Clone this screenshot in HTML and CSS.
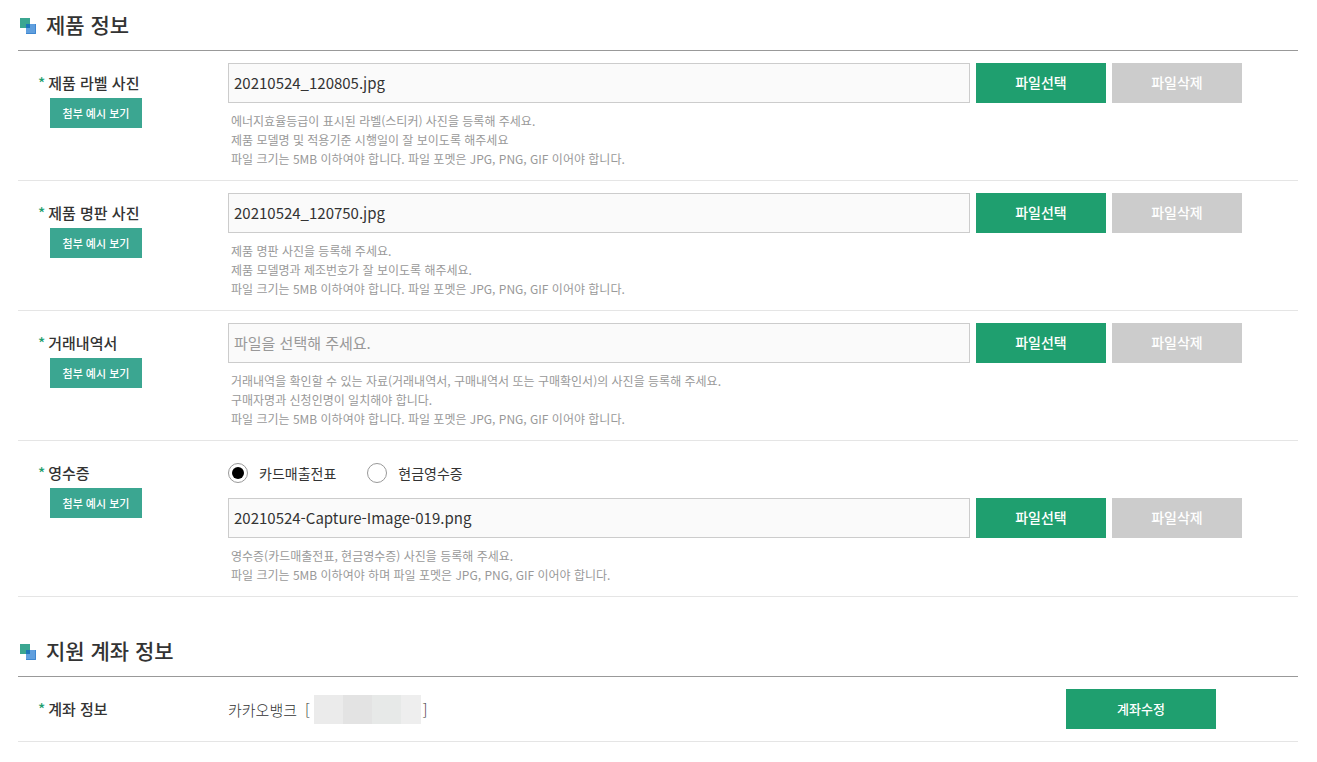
FILE: index.html
```html
<!DOCTYPE html>
<html lang="ko">
<head>
  <meta charset="UTF-8">
  <meta name="viewport" content="width=device-width, initial-scale=1.0">
  <title>제품 정보</title>
  <link rel="stylesheet" href="styles.css">
</head>
<body>

<!-- 제품 정보 -->
<section class="section">
  <h2 class="section-title">
    <svg class="title-icon" viewBox="0 0 16 16" aria-hidden="true">
      <rect width="10" height="10" fill="#3ba691"/>
      <rect x="6" y="6" width="10" height="10" fill="#609fde"/>
      <path d="M6 15.5h9.5V6" fill="none" stroke="#3f87d0"/>
      <rect x="6" y="6" width="4" height="4" fill="#1b76ba"/>
    </svg>
    제품 정보
  </h2>

  <div class="row">
    <div class="row-head">
      <label class="row-label" for="labelFile"><span class="required">*</span>제품 라벨 사진</label>
      <button type="button" class="btn-example">첨부 예시 보기</button>
    </div>
    <div class="row-body">
      <div class="file-line">
        <input type="text" class="file-name" id="labelFile" value="20210524_120805.jpg" placeholder="파일을 선택해 주세요." readonly>
        <button type="button" class="btn btn-select">파일선택</button>
        <button type="button" class="btn btn-delete">파일삭제</button>
      </div>
      <p class="hint">
        에너지효율등급이 표시된 라벨(스티커) 사진을 등록해 주세요.<br>
        제품 모델명 및 적용기준 시행일이 잘 보이도록 해주세요<br>
        파일 크기는 5MB 이하여야 합니다. 파일 포멧은 JPG, PNG, GIF 이어야 합니다.
      </p>
    </div>
  </div>

  <div class="row">
    <div class="row-head">
      <label class="row-label" for="plateFile"><span class="required">*</span>제품 명판 사진</label>
      <button type="button" class="btn-example">첨부 예시 보기</button>
    </div>
    <div class="row-body">
      <div class="file-line">
        <input type="text" class="file-name" id="plateFile" value="20210524_120750.jpg" placeholder="파일을 선택해 주세요." readonly>
        <button type="button" class="btn btn-select">파일선택</button>
        <button type="button" class="btn btn-delete">파일삭제</button>
      </div>
      <p class="hint">
        제품 명판 사진을 등록해 주세요.<br>
        제품 모델명과 제조번호가 잘 보이도록 해주세요.<br>
        파일 크기는 5MB 이하여야 합니다. 파일 포멧은 JPG, PNG, GIF 이어야 합니다.
      </p>
    </div>
  </div>

  <div class="row">
    <div class="row-head">
      <label class="row-label" for="dealFile"><span class="required">*</span>거래내역서</label>
      <button type="button" class="btn-example">첨부 예시 보기</button>
    </div>
    <div class="row-body">
      <div class="file-line">
        <input type="text" class="file-name" id="dealFile" placeholder="파일을 선택해 주세요." readonly>
        <button type="button" class="btn btn-select">파일선택</button>
        <button type="button" class="btn btn-delete">파일삭제</button>
      </div>
      <p class="hint">
        거래내역을 확인할 수 있는 자료(거래내역서, 구매내역서 또는 구매확인서)의 사진을 등록해 주세요.<br>
        구매자명과 신청인명이 일치해야 합니다.<br>
        파일 크기는 5MB 이하여야 합니다. 파일 포멧은 JPG, PNG, GIF 이어야 합니다.
      </p>
    </div>
  </div>

  <div class="row">
    <div class="row-head">
      <label class="row-label" for="receiptFile"><span class="required">*</span>영수증</label>
      <button type="button" class="btn-example">첨부 예시 보기</button>
    </div>
    <div class="row-body">
      <div class="radio-line">
        <label class="radio"><input type="radio" name="receiptType" checked>카드매출전표</label>
        <label class="radio"><input type="radio" name="receiptType">현금영수증</label>
      </div>
      <div class="file-line">
        <input type="text" class="file-name" id="receiptFile" value="20210524-Capture-Image-019.png" placeholder="파일을 선택해 주세요." readonly>
        <button type="button" class="btn btn-select">파일선택</button>
        <button type="button" class="btn btn-delete">파일삭제</button>
      </div>
      <p class="hint">
        영수증(카드매출전표, 현금영수증) 사진을 등록해 주세요.<br>
        파일 크기는 5MB 이하여야 하며 파일 포멧은 JPG, PNG, GIF 이어야 합니다.
      </p>
    </div>
  </div>
</section>

<!-- 지원 계좌 정보 -->
<section class="section">
  <h2 class="section-title">
    <svg class="title-icon" viewBox="0 0 16 16" aria-hidden="true">
      <rect width="10" height="10" fill="#3ba691"/>
      <rect x="6" y="6" width="10" height="10" fill="#609fde"/>
      <path d="M6 15.5h9.5V6" fill="none" stroke="#3f87d0"/>
      <rect x="6" y="6" width="4" height="4" fill="#1b76ba"/>
    </svg>
    지원 계좌 정보
  </h2>

  <div class="row">
    <div class="row-head">
      <span class="row-label"><span class="required">*</span>계좌 정보</span>
    </div>
    <div class="row-body account">
      <p class="account-text">카카오뱅크<span class="bracket">[</span><span class="masked"></span>]</p>
      <button type="button" class="btn btn-account">계좌수정</button>
    </div>
  </div>
</section>

</body>
</html>
```
FILE: styles.css
```css
* {
    box-sizing: border-box;
}

body {
    margin: 0;
    padding: 0 19px 0 18px;
    background: #fff;
    color: #333;
    font-family: "Noto Sans CJK KR", "Noto Sans", sans-serif;
    font-size: 15px;
}

button,
input {
    font-family: inherit;
}

.section {
    margin-bottom: 29px;
}

.section-title {
    display: flex;
    align-items: center;
    gap: 10px;
    height: 51px;
    margin: 0;
    padding: 0 0 2px 2px;
    border-bottom: 1px solid #999;
    font-size: 21px;
    font-weight: 500;
}

.title-icon {
    width: 16px;
    height: 16px;
    margin-top: 4px;
}

/* 입력 행 */
.row {
    display: grid;
    grid-template-columns: 210px 1fr;
    border-bottom: 1px solid #e5e5e5;
}

.row-head {
    padding: 18px 0 0 20px;
}

.row-label {
    display: flex;
    gap: 3px;
    margin-bottom: 1px;
    line-height: 28px;
    font-weight: 500;
}

.required {
    color: #1f9f6f;
}

.btn-example {
    display: block;
    width: 92px;
    height: 30px;
    margin-left: 12px;
    padding: 0;
    border: 0;
    background: #3ba691;
    color: #fff;
    font-size: 11px;
    font-weight: 500;
    cursor: pointer;
}

.row-body {
    padding: 12px 56px 12px 0;
}

.file-line {
    display: flex;
    gap: 6px;
}

.file-name {
    flex: 1;
    min-width: 0;
    height: 40px;
    padding: 0 5px 2px;
    border: 1px solid #ccc;
    background: #fafafa;
    color: #333;
    font-size: 15px;
}

.file-name::placeholder {
    color: #999;
    opacity: 1;
}

.btn {
    width: 130px;
    height: 40px;
    padding: 0 0 2px;
    border: 0;
    color: #fff;
    font-size: 14px;
    font-weight: 500;
    cursor: pointer;
}

.btn-select,
.btn-account {
    background: #1f9f6f;
}

.btn-delete {
    background: #ccc;
}

.hint {
    margin: 8px 0 0 3px;
    color: #999;
    font-size: 12px;
    line-height: 19px;
}

/* 영수증 종류 */
.radio-line {
    display: flex;
    align-items: center;
    gap: 31px;
    height: 40px;
    margin-bottom: 5px;
}

.radio {
    display: flex;
    align-items: center;
    gap: 11px;
    font-size: 14px;
}

.radio input {
    appearance: none;
    width: 20px;
    height: 20px;
    margin: 0;
    padding: 3px;
    border: 1px solid #999;
    border-radius: 50%;
    background: #fff;
}

.radio input:checked {
    background: #000 content-box;
}

/* 계좌 */
.account {
    display: flex;
    align-items: center;
    justify-content: space-between;
    padding: 12px 82px 12px 0;
}

.account-text {
    display: flex;
    align-items: center;
    margin: 0;
    font-weight: 300;
}

.bracket {
    margin: 0 4px 0 8px;
}

.masked {
    width: 107px;
    height: 29px;
    margin-right: 2px;
    background: linear-gradient(to right, #ebebeb 29px, #e3e3e3 29px 58px, #e7e9e8 58px 87px, #eee 87px);
}

.btn-account {
    width: 150px;
    font-size: 13px;
}
```
